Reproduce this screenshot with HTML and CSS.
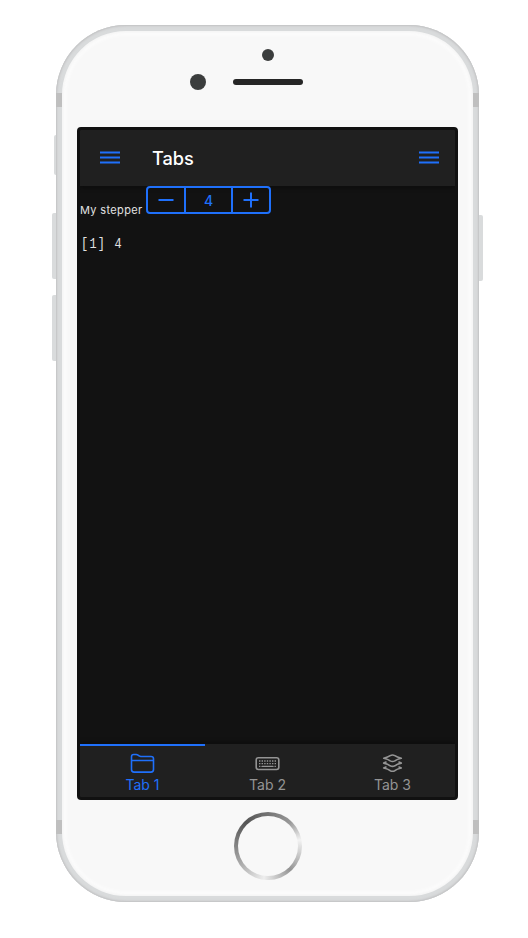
FILE: index.html
```html
<!DOCTYPE html>
<html lang="en">
<head>
<meta charset="utf-8">
<title>Tabs</title>
<link rel="stylesheet" href="styles.css">
</head>
<body>
<div class="phone">
  <i class="band band-top"></i><i class="band band-bottom"></i>
  <i class="button switch"></i><i class="button vol-up"></i><i class="button vol-down"></i><i class="button power"></i>
  <i class="sensor"></i><i class="camera"></i><i class="speaker"></i>
  <div class="screen">
    <header class="navbar">
      <svg class="menu" viewBox="0 0 20 14"><path d="M0 1.400h20M0 6.500h20M0 11.600h20"/></svg>
      <h1>Tabs</h1>
      <svg class="menu" viewBox="0 0 20 14"><path d="M0 1.400h20M0 6.500h20M0 11.600h20"/></svg>
    </header>
    <main>
      <div class="field">
        <label>My stepper</label>
        <div class="stepper">
          <span class="step"><svg viewBox="0 0 16 16"><path d="M0.5 8h15"/></svg></span>
          <span class="value">4</span>
          <span class="step"><svg viewBox="0 0 16 16"><path d="M0.5 8h15M8 .5v15"/></svg></span>
        </div>
      </div>
      <pre>[1] 4</pre>
    </main>
    <nav class="tabbar">
      <a class="tab active">
        <svg viewBox="0 0 26 22"><path d="M2 17V4.200Q2 2 4.200 2h2.500q1 0 1.800.6l1.100.8q.8.6 1.800.6h10.100Q24 4 24 6.200V17q0 2.600-2.600 2.600H4.600Q2 19.600 2 17zM2 8h22"/></svg>
        <span>Tab 1</span>
      </a>
      <a class="tab">
        <svg viewBox="0 0 26 22"><rect x="1.700" y="5.200" width="22.600" height="11.800" rx="2.200"/><path class="keys" d="M4.500 8.500h17M4.500 11.100h17M4.500 13.900h1.500M20 13.900h1.500"/><path class="space" d="M7.500 13.900h11"/></svg>
        <span>Tab 2</span>
      </a>
      <a class="tab">
        <svg viewBox="0 0 26 22"><path d="M4.200 5.700Q8.500 4.700 10.700 3.100 13 1.800 15.300 3.100 17.500 4.700 21.800 5.700 17.500 6.700 15.300 8.400 13 9.600 10.700 8.400 8.500 6.700 4.200 5.700zM6.500 9.600l-2.300 1q4.300 1 6.500 2.700 2.300 1.200 4.600 0 2.200-1.700 6.500-2.700l-2.300-1M6.500 14.500l-2.300 1q4.300 1 6.500 2.700 2.300 1.200 4.600 0 2.200-1.700 6.500-2.700l-2.300-1"/></svg>
        <span>Tab 3</span>
      </a>
    </nav>
  </div>
  <i class="home"></i>
</div>
</body>
</html>
```
FILE: styles.css
```css
* { box-sizing: border-box; }
body { margin: 0; background: #fff; font-family: Inter, "Liberation Sans", sans-serif; }
.phone {
  position: relative;
  width: 423px;
  height: 877px;
  margin: 25px 0 0 56px;
  padding: 102px 21px 0;
  border-radius: 70px;
  background: #f8f8f8;
  box-shadow: inset 0 0 1px 1px #c6c7c8, inset 0 0 2px 2px #d2d3d4, inset 0 0 0 6px #d9dbdc, inset 0 0 2px 8px #f6f6f6, inset 0 0 5px 9px #fff;
}
.band { position: absolute; left: 0; right: 0; height: 14px; border: solid #bfbfbf; border-width: 0 6px; }
.band-top { top: 68px; }
.band-bottom { top: 795px; }
.button { position: absolute; left: -4px; width: 4px; height: 66px; background: #d9dbdc; border-radius: 2px 0 0 2px; }
.switch { left: -2px; width: 2px; top: 110px; height: 40px; }
.vol-up { top: 188px; }
.vol-down { top: 270px; }
.power { left: 423px; top: 190px; border-radius: 0 2px 2px 0; }
.sensor, .camera { position: absolute; border-radius: 50%; background: #3b3d3d; }
.sensor { left: 206px; top: 24px; width: 12px; height: 12px; }
.camera { left: 134px; top: 49px; width: 16px; height: 16px; }
.speaker { position: absolute; left: 177px; top: 54px; width: 70px; height: 6px; border-radius: 3px; background: #262626; }
.screen {
  display: flex;
  flex-direction: column;
  width: 381px;
  height: 673px;
  border: 3px solid #111;
  border-radius: 4px;
  background: #121212;
  overflow: hidden;
}
.navbar {
  display: flex;
  flex: 0 0 56px;
  align-items: center;
  padding: 0 16px 0 20px;
  background: #202020;
  box-shadow: 0 1px 4px #0c0c0c;
}
.navbar h1 { flex: 1; margin: 0 0 1px 32px; color: #fff; font-size: 18.2px; font-weight: 500; line-height: 24px; }
svg { fill: none; stroke: currentColor; stroke-linecap: round; stroke-linejoin: round; }
.menu { width: 20px; height: 14px; color: #1f70fb; stroke-width: 2; stroke-linecap: butt; }
main { flex: 1; color: #e2e2e2; position: relative; }
.field { display: flex; }
label { width: 66px; padding-top: 17px; font-size: 11px; line-height: 14px; letter-spacing: .35px; white-space: nowrap; }
.stepper { display: flex; width: 125px; height: 28px; border: 2px solid #1f70fb; border-radius: 4px; color: #1f70fb; }
.step { display: flex; flex: 1; align-items: center; justify-content: center; }
.step svg { width: 16px; height: 16px; stroke-width: 2; stroke-linecap: butt; }
.value { width: 49px; border: solid #1f70fb; border-width: 0 2px; text-align: center; font-size: 14px; font-weight: 500; line-height: 26px; }
pre { width: 100px; margin: 19px 0 0 1px; font: 14px/16px "Liberation Mono", monospace; letter-spacing: 1.48px; transform: scaleX(.85); transform-origin: left; }
.tabbar { display: flex; flex: 0 0 53px; background: #202020; box-shadow: 0 -1px 4px #0c0c0c; }
.tab { display: flex; flex: 1; flex-direction: column; align-items: center; padding-top: 8px; color: #949494; font-size: 14px; line-height: 20px; }
.tab.active { border-top: 2px solid #1f70fb; padding-top: 6px; color: #1f70fb; }
.tab svg { width: 26px; height: 22px; margin-bottom: 1px; stroke-width: 1.6; transform: translate(-.5px, .5px); }
.tab .keys { stroke-width: 1.4; stroke-dasharray: 1.4 1.2; stroke-linecap: butt; }
.tab .space { stroke-width: 1.3; }
.home {
  position: absolute;
  left: 178px;
  top: 787px;
  width: 68px;
  height: 68px;
  border: 4px solid transparent;
  border-radius: 50%;
  background: linear-gradient(#f8f8f8, #f8f8f8) padding-box, conic-gradient(from 0deg, #747474, #999 12%, #f3f3f3 22%, #ccc 29%, #949494 38%, #eee 52%, #aaa 66%, #858585 75%, #555 88%, #747474) border-box;
}
```
